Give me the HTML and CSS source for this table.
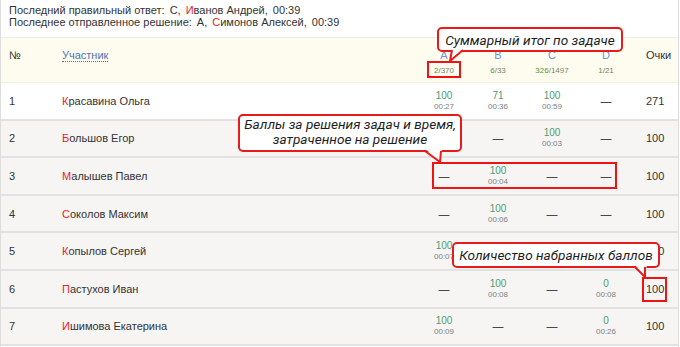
FILE: index.html
```html
<!DOCTYPE html>
<html lang="ru">
<head>
<meta charset="utf-8">
<title>Монитор</title>
<link rel="stylesheet" href="styles.css">
</head>
<body>
<div class="board">
  <div class="info">
    <div class="line">Последний правильный ответ:<span class="gap">С,</span><span class="gap"><span class="first">И</span>ванов Андрей,</span><span class="gap">00:39</span></div>
    <div class="line">Последнее отправленное решение:<span class="gap">А,</span><span class="gap"><span class="first">С</span>имонов Алексей,</span><span class="gap">00:39</span></div>
  </div>

  <div class="table">
    <div class="row head">
      <div class="c-num">№</div>
      <div class="c-name"><span class="sort">Участник</span></div>
      <div class="c-prob"><div class="letter">A</div><div class="count"><span class="ok">2</span>/370</div></div>
      <div class="c-prob"><div class="letter">B</div><div class="count"><span class="ok">6</span>/33</div></div>
      <div class="c-prob"><div class="letter">C</div><div class="count"><span class="ok">326</span>/1497</div></div>
      <div class="c-prob"><div class="letter">D</div><div class="count"><span class="ok">1</span>/21</div></div>
      <div class="c-pts">Очки</div>
    </div>

    <div class="row first-row">
      <div class="c-num">1</div>
      <div class="c-name"><span class="first">К</span>расавина Ольга</div>
      <div class="c-prob"><div class="score">100</div><div class="time">00:27</div></div>
      <div class="c-prob"><div class="score">71</div><div class="time">00:36</div></div>
      <div class="c-prob"><div class="score">100</div><div class="time">00:59</div></div>
      <div class="c-prob"><span class="dash">—</span></div>
      <div class="c-pts">271</div>
    </div>

    <div class="row">
      <div class="c-num">2</div>
      <div class="c-name"><span class="first">Б</span>ольшов Егор</div>
      <div class="c-prob"></div>
      <div class="c-prob"><span class="dash">—</span></div>
      <div class="c-prob"><div class="score">100</div><div class="time">00:03</div></div>
      <div class="c-prob"><span class="dash">—</span></div>
      <div class="c-pts">100</div>
    </div>

    <div class="row">
      <div class="c-num">3</div>
      <div class="c-name"><span class="first">М</span>алышев Павел</div>
      <div class="c-prob"><span class="dash">—</span></div>
      <div class="c-prob"><div class="score">100</div><div class="time">00:04</div></div>
      <div class="c-prob"><span class="dash">—</span></div>
      <div class="c-prob"><span class="dash">—</span></div>
      <div class="c-pts">100</div>
    </div>

    <div class="row">
      <div class="c-num">4</div>
      <div class="c-name"><span class="first">С</span>околов Максим</div>
      <div class="c-prob"><span class="dash">—</span></div>
      <div class="c-prob"><div class="score">100</div><div class="time">00:06</div></div>
      <div class="c-prob"><span class="dash">—</span></div>
      <div class="c-prob"><span class="dash">—</span></div>
      <div class="c-pts">100</div>
    </div>

    <div class="row">
      <div class="c-num">5</div>
      <div class="c-name"><span class="first">К</span>опылов Сергей</div>
      <div class="c-prob"><div class="score">100</div><div class="time">00:07</div></div>
      <div class="c-prob"></div>
      <div class="c-prob"></div>
      <div class="c-prob"></div>
      <div class="c-pts">100</div>
    </div>

    <div class="row">
      <div class="c-num">6</div>
      <div class="c-name"><span class="first">П</span>астухов Иван</div>
      <div class="c-prob"><span class="dash">—</span></div>
      <div class="c-prob"><div class="score">100</div><div class="time">00:08</div></div>
      <div class="c-prob"><span class="dash">—</span></div>
      <div class="c-prob"><div class="score">0</div><div class="time">00:08</div></div>
      <div class="c-pts">100</div>
    </div>

    <div class="row">
      <div class="c-num">7</div>
      <div class="c-name"><span class="first">И</span>шимова Екатерина</div>
      <div class="c-prob"><div class="score">100</div><div class="time">00:09</div></div>
      <div class="c-prob"><span class="dash">—</span></div>
      <div class="c-prob"><span class="dash">—</span></div>
      <div class="c-prob"><div class="score">0</div><div class="time">00:26</div></div>
      <div class="c-pts">100</div>
    </div>
  </div>

  <div class="mark mark-total"></div>
  <div class="mark mark-cells"></div>
  <div class="mark mark-points"></div>

  <div class="callout callout-total">
    <span class="ctext">Суммарный итог по задаче</span>
    <svg class="tail" width="186" height="40" viewBox="0 0 186 40">
      <polygon points="15,21 27,21 13,33" fill="#fff"/>
      <polyline points="15,23 13,34 26,23" fill="none" stroke="#e81a1a" stroke-width="2" stroke-linejoin="round"/>
    </svg>
  </div>

  <div class="callout callout-cells">
    <span class="ctext">Баллы за решения задач и время,<br>затраченное на решение</span>
    <svg class="tail" width="224" height="52" viewBox="0 0 224 52">
      <polygon points="186,34 204,34 202,47" fill="#fff"/>
      <polyline points="187,37 202,48 203,37" fill="none" stroke="#e81a1a" stroke-width="2" stroke-linejoin="round"/>
    </svg>
  </div>

  <div class="callout callout-points">
    <span class="ctext">Количество набранных баллов</span>
    <svg class="tail" width="208" height="40" viewBox="0 0 208 40">
      <polygon points="182,22 195,22 193,34" fill="#fff"/>
      <polyline points="183,25 193,35 193,25" fill="none" stroke="#e81a1a" stroke-width="2" stroke-linejoin="round"/>
    </svg>
  </div>
</div>
</body>
</html>
```
FILE: styles.css
```css
* { box-sizing: border-box; }

html, body {
  margin: 0;
  padding: 0;
  background: #fff;
}

body {
  font-family: "Liberation Sans", Arial, sans-serif;
  font-size: 11px;
  color: #333;
}

.board {
  position: relative;
  width: 679px;
  height: 347px;
  border-left: 1px solid #dedede;
  border-right: 1px solid #dedede;
  overflow: hidden;
}

.info {
  height: 38px;
  padding: 4px 0 0 8px;
  border-bottom: 1px solid #ededed;
  line-height: 12px;
  background: #fff;
}

.gap { margin-left: 5px; }

.first { color: #ec2227; }

.row {
  display: grid;
  grid-template-columns: 53px 1fr repeat(4, 54px) 45px;
  align-items: center;
  padding-left: 8px;
  height: 37.6px;
  border-bottom: 2px solid #e2e2e2;
  background: #f6f5f3;
}

.row.first-row { background: #fff; }

.row.head {
  height: 45px;
  align-items: start;
  background: #fdfcef;
  border-bottom: 1px solid #f1efe0;
}

.head .c-num,
.head .c-name,
.head .c-pts {
  padding-top: 10px;
  line-height: 14px;
}

.head .c-prob { padding-top: 10px; }

.sort {
  color: #4d74b5;
  border-bottom: 1px dotted #4d74b5;
}

.letter {
  color: #6f90d2;
  font-size: 11px;
  line-height: 14px;
}

.count {
  margin-top: 4px;
  font-size: 8px;
  line-height: 10px;
  color: #7d8360;
}

.count .ok { color: #4f9a4f; }

.c-prob {
  text-align: center;
}

.c-pts {
  padding-left: 13px;
}

.score {
  color: #4d9c72;
  font-size: 10px;
  line-height: 11px;
}

.time {
  color: #808080;
  font-size: 8px;
  line-height: 11px;
}

.dash {
  color: #222;
  font-size: 11px;
}

.mark {
  position: absolute;
  border: 2px solid #ee1414;
}

.mark-total  { left: 426px; top: 61px;  width: 34px;  height: 17px; }
.mark-cells  { left: 431px; top: 162px; width: 185px; height: 27px; }
.mark-points { left: 641px; top: 277px; width: 25px;  height: 25px; }

.callout {
  position: absolute;
  display: flex;
  align-items: center;
  justify-content: center;
  text-align: center;
  background: #fff;
  border: 2px solid #e81a1a;
  border-radius: 5px;
  font-family: Roboto, "Liberation Sans", sans-serif;
  font-style: italic;
  font-size: 13.6px;
  line-height: 16px;
  color: #1e1e1e;
}

.ctext { white-space: nowrap; }

.callout .tail {
  position: absolute;
  left: -2px;
  top: -2px;
  overflow: visible;
}

.callout-total  { left: 436px; top: 27px;  width: 186px; height: 25px; }
.callout-cells  { left: 237px; top: 114px; width: 224px; height: 38px; line-height: 15.5px; padding-bottom: 2px; }
.callout-points { left: 451px; top: 242px; width: 208px; height: 26px; }
```
